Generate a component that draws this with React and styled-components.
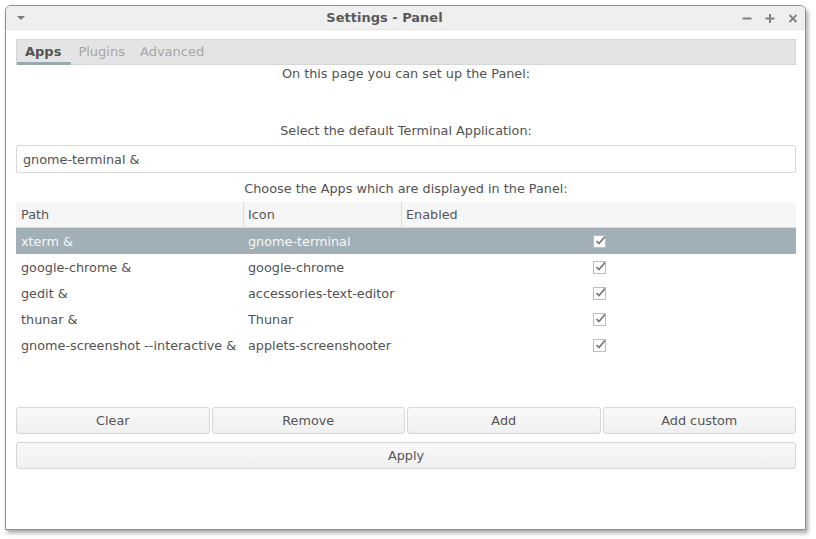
import React from "react";
import styled, { createGlobalStyle } from "styled-components";

const GlobalStyle = createGlobalStyle`
  body {
    margin: 0;
    background: #ffffff;
    font-family: "DejaVu Sans", "Liberation Sans", sans-serif;
    font-size: 12.8px;
  }
`;

const Page = styled.div`
  width: 816px;
  height: 539px;
  padding: 5px 0 0 5px;
  box-sizing: border-box;
`;

const Window = styled.div`
  width: 801px;
  height: 525px;
  box-sizing: border-box;
  border: 1px solid #8e8e8e;
  border-radius: 6px 6px 0 0;
  background: #ffffff;
  box-shadow: 2px 3px 4px rgba(0, 0, 0, 0.35);
  display: flex;
  flex-direction: column;
  overflow: hidden;
`;

const TitleBar = styled.div`
  height: 23px;
  flex: none;
  display: flex;
  align-items: center;
  background: #efefef;
  border-bottom: 1px solid #e2e2e2;
  padding: 0 6px 0 10px;
`;

const Title = styled.div`
  flex: 1;
  text-align: center;
  font-weight: bold;
  color: #5a5a5a;
  font-size: 13px;
  padding-left: 2px;
`;

const Controls = styled.div`
  display: flex;
  gap: 11px;
  align-items: center;
`;

const Body = styled.div`
  flex: 1;
  padding: 9px 9px 0 10px;
  display: flex;
  flex-direction: column;
  color: #525252;
`;

const TabBar = styled.div`
  height: 26px;
  box-sizing: border-box;
  display: flex;
  background: #e4e4e4;
  border: 1px solid #d6d6d6;
`;

const Tab = styled.div`
  display: flex;
  align-items: center;
  padding: ${(p) => (p.$active ? "0 10px 0 8px" : "0 8px 0 7px")};
  font-weight: ${(p) => (p.$active ? "bold" : "normal")};
  font-size: 13px;
  color: ${(p) => (p.$active ? "#555555" : "#a6a6a6")};
  border-bottom: 3px solid ${(p) => (p.$active ? "#98a9b1" : "transparent")};
  margin-bottom: -1px;
  padding-top: 1px;
`;

const Label = styled.div`
  text-align: center;
  line-height: 16px;
  margin-top: ${(p) => p.$top || 0}px;
`;

const Input = styled.div`
  margin-top: 6px;
  height: 28px;
  box-sizing: border-box;
  border: 1px solid #d8d8d8;
  border-radius: 2px;
  display: flex;
  align-items: center;
  padding-left: 6px;
`;

const Table = styled.div`
  margin-top: 5px;
  height: 196px;
  display: grid;
  grid-template-columns: 227px 158px 1fr;
  grid-auto-rows: 26px;
  align-content: start;
`;

const HeadCell = styled.div`
  display: flex;
  align-items: center;
  background: #f6f6f6;
  border-bottom: 1px solid #dcdcdc;
  border-left: ${(p) => (p.$first ? "none" : "1px solid #dcdcdc")};
  padding-left: ${(p) => (p.$first ? "5px" : "4px")};
  color: #555555;
`;

const Cell = styled.div`
  display: flex;
  align-items: center;
  justify-content: ${(p) => (p.$center ? "center" : "flex-start")};
  padding-left: ${(p) => (p.$center ? "0" : "5px")};
  background: ${(p) => (p.$selected ? "#a1afb6" : "transparent")};
  color: ${(p) => (p.$selected ? "#f7f7f7" : "#525252")};
  white-space: nowrap;
`;

const ButtonRow = styled.div`
  margin-top: 9px;
  display: grid;
  grid-template-columns: repeat(4, 1fr);
  gap: 2px;
`;

const Button = styled.div`
  height: 27px;
  box-sizing: border-box;
  border: 1px solid #d6d6d6;
  border-radius: 3px;
  background: linear-gradient(#f9f9f9, #f0f0f0);
  display: flex;
  align-items: center;
  justify-content: center;
  color: #555555;
  margin-top: ${(p) => p.$top || 0}px;
`;

const Box = styled.div`
  width: 11px;
  height: 11px;
  border: 1px solid #bdbdbd;
  background: #ffffff;
  position: relative;
  margin-left: 1px;
`;

const CheckBox = () => (
  <Box>
    <svg
      width="13"
      height="12"
      viewBox="0 0 13 12"
      style={{ position: "absolute", left: 0, top: -2 }}
    >
      <path d="M2.5 7 L5 9.5 L11 2.5" fill="none" stroke="#777777" strokeWidth="1.7" />
    </svg>
  </Box>
);

const MenuIcon = () => (
  <svg width="10" height="8" viewBox="0 0 10 8">
    <path d="M1 2 L9 2 L5 6 Z" fill="#7a7a7a" />
  </svg>
);

const MinIcon = () => (
  <svg width="12" height="12" viewBox="0 0 12 12">
    <path d="M1.5 6.5 H10.5" stroke="#808080" strokeWidth="2" />
  </svg>
);

const MaxIcon = () => (
  <svg width="12" height="12" viewBox="0 0 12 12">
    <path d="M1.5 6.5 H10.5 M6 2 V11" stroke="#808080" strokeWidth="2" />
  </svg>
);

const CloseIcon = () => (
  <svg width="12" height="12" viewBox="0 0 12 12">
    <path d="M2.5 3 L9.5 10 M9.5 3 L2.5 10" stroke="#808080" strokeWidth="1.8" />
  </svg>
);

const apps = [
  ["xterm &", "gnome-terminal"],
  ["google-chrome &", "google-chrome"],
  ["gedit &", "accessories-text-editor"],
  ["thunar &", "Thunar"],
  ["gnome-screenshot --interactive &", "applets-screenshooter"],
];

export default function App() {
  return (
    <Page>
      <GlobalStyle />
      <Window>
        <TitleBar>
          <MenuIcon />
          <Title>Settings - Panel</Title>
          <Controls>
            <MinIcon />
            <MaxIcon />
            <CloseIcon />
          </Controls>
        </TitleBar>
        <Body>
          <TabBar>
            <Tab $active>Apps</Tab>
            <Tab>Plugins</Tab>
            <Tab>Advanced</Tab>
          </TabBar>
          <Label $top={1}>On this page you can set up the Panel:</Label>
          <Label $top={41}>Select the default Terminal Application:</Label>
          <Input>gnome-terminal &amp;</Input>
          <Label $top={8}>Choose the Apps which are displayed in the Panel:</Label>
          <Table>
            <HeadCell $first>Path</HeadCell>
            <HeadCell>Icon</HeadCell>
            <HeadCell>Enabled</HeadCell>
            {apps.map(([path, icon], i) => (
              <React.Fragment key={path}>
                <Cell $selected={i === 0}>{path}</Cell>
                <Cell $selected={i === 0}>{icon}</Cell>
                <Cell $selected={i === 0} $center>
                  <CheckBox />
                </Cell>
              </React.Fragment>
            ))}
          </Table>
          <ButtonRow>
            <Button>Clear</Button>
            <Button>Remove</Button>
            <Button>Add</Button>
            <Button>Add custom</Button>
          </ButtonRow>
          <Button $top={8}>Apply</Button>
        </Body>
      </Window>
    </Page>
  );
}
